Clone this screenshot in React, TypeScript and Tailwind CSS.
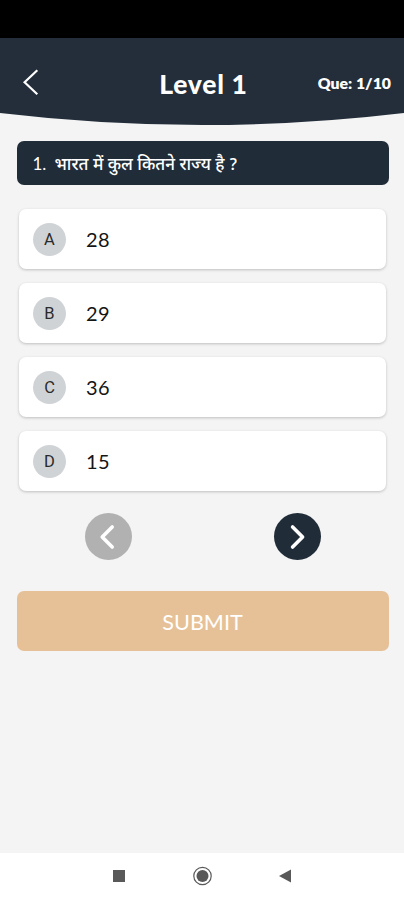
import { useState } from "react";
import clsx from "clsx";

const questions = [
  {
    text: "भारत में कुल कितने राज्य है ?",
    options: ["28", "29", "36", "15"],
  },
];

const letters = ["A", "B", "C", "D"];

function Header({ current, total }: { current: number; total: number }) {
  return (
    <header className="relative h-[87px] text-white">
      <svg className="absolute inset-0 h-[87px] w-full" viewBox="0 0 404 87" preserveAspectRatio="none" aria-hidden="true">
        <path d="M0 0H404V75Q202 99 0 75Z" fill="#232e3a" />
      </svg>
      <div className="relative grid h-[87px] grid-cols-[1fr_auto_1fr] items-center pr-[13px] pl-[22px]">
        <button type="button" aria-label="Back" className="w-5">
          <svg className="block h-7 w-5" viewBox="0 0 20 28" fill="none" stroke="currentColor" strokeWidth="2.2">
            <path d="M15.3 2.3 2.6 14.2 15.3 26.2" />
          </svg>
        </button>
        <h1 className="pt-[4px] pr-[6px] text-[26.5px] leading-8 font-black tracking-[0.7px] whitespace-nowrap">Level 1</h1>
        <span className="justify-self-end pt-[3px] text-[15.8px] leading-5 font-extrabold whitespace-nowrap">
          Que: {current}/{total}
        </span>
      </div>
    </header>
  );
}

function Option({ letter, label, selected, onSelect }: {
  letter: string;
  label: string;
  selected: boolean;
  onSelect: () => void;
}) {
  return (
    <button
      type="button"
      onClick={onSelect}
      aria-pressed={selected}
      className={clsx(
        "flex h-[60px] w-full items-center rounded-[7px] bg-white pl-3.5 text-left shadow-[0_1px_3px_rgba(0,0,0,0.22)]",
        selected && "ring-2 ring-[#232e3a]",
      )}
    >
      <span className="grid size-[33px] place-items-center rounded-full bg-[#d0d3d6] pt-[2px] font-['Roboto',sans-serif] text-[16.5px] leading-5 text-[#2b2b2b]">
        {letter}
      </span>
      <span className="ml-5 text-[20px] leading-6 tracking-[0.5px] text-[#151515]">{label}</span>
    </button>
  );
}

export default function App() {
  const [answer, setAnswer] = useState<number | null>(null);
  const question = questions[0];

  return (
    <div className="flex h-[900px] w-full flex-col bg-[#f4f4f4] font-['Lato',sans-serif]">
      <div className="h-[38px] bg-black" />
      <Header current={1} total={10} />

      <main className="flex-1">
        <div className="mr-[15.5px] ml-[16.5px] mt-4 flex h-[44px] items-center rounded-[7px] bg-[#202d39] pl-4 text-white">
          <span className="w-[22px] pt-[2px] text-[17px]">1.</span>
          <span className="pt-[6px] font-['Noto_Sans_Devanagari','Noto_Sans',sans-serif] text-[17px] leading-6 font-medium whitespace-nowrap">{question.text}</span>
        </div>

        <div className="mt-6 mr-[18px] ml-[19px] flex flex-col gap-3.5">
          {question.options.map((label, i) => (
            <Option
              key={label}
              letter={letters[i]}
              label={label}
              selected={answer === i}
              onSelect={() => setAnswer(i)}
            />
          ))}
        </div>

        <div className="mt-[22px] flex justify-between pr-[83.5px] pl-[84.5px]">
          <button type="button" aria-label="Previous" className="grid size-[47px] place-items-center rounded-full bg-[#b1b1b1] text-white">
            <svg className="h-7 w-5" viewBox="0 0 20 28" fill="none" stroke="currentColor" strokeWidth="3.6" strokeLinecap="round" strokeLinejoin="round">
              <path d="M14.2 4 4.2 14 14.2 24" />
            </svg>
          </button>
          <button type="button" aria-label="Next" className="grid size-[47px] place-items-center rounded-full bg-[#202d39] text-white">
            <svg className="h-7 w-5" viewBox="0 0 20 28" fill="none" stroke="currentColor" strokeWidth="3.6" strokeLinecap="round" strokeLinejoin="round">
              <path d="M5.6 4 15.6 14 5.6 24" />
            </svg>
          </button>
        </div>

        <button type="button" className="ml-[16.5px] mt-[31px] grid h-[60px] w-[372px] place-items-center rounded-[7px] bg-[#e6c198] pt-[2px] text-[21.6px] text-white">
          SUBMIT
        </button>
      </main>

      <nav className="flex h-[47px] justify-center bg-white text-[#595959]">
        <svg className="h-[47px] w-[180px]" viewBox="112 0 180 47" fill="currentColor">
          <rect x="113" y="17" width="12" height="12" />
          <circle cx="202.5" cy="23" r="6" />
          <circle cx="202.5" cy="23" r="8.7" fill="none" stroke="currentColor" strokeWidth="1.2" />
          <path d="M279 23 291 16.5V29.5Z" />
        </svg>
      </nav>
    </div>
  );
}
